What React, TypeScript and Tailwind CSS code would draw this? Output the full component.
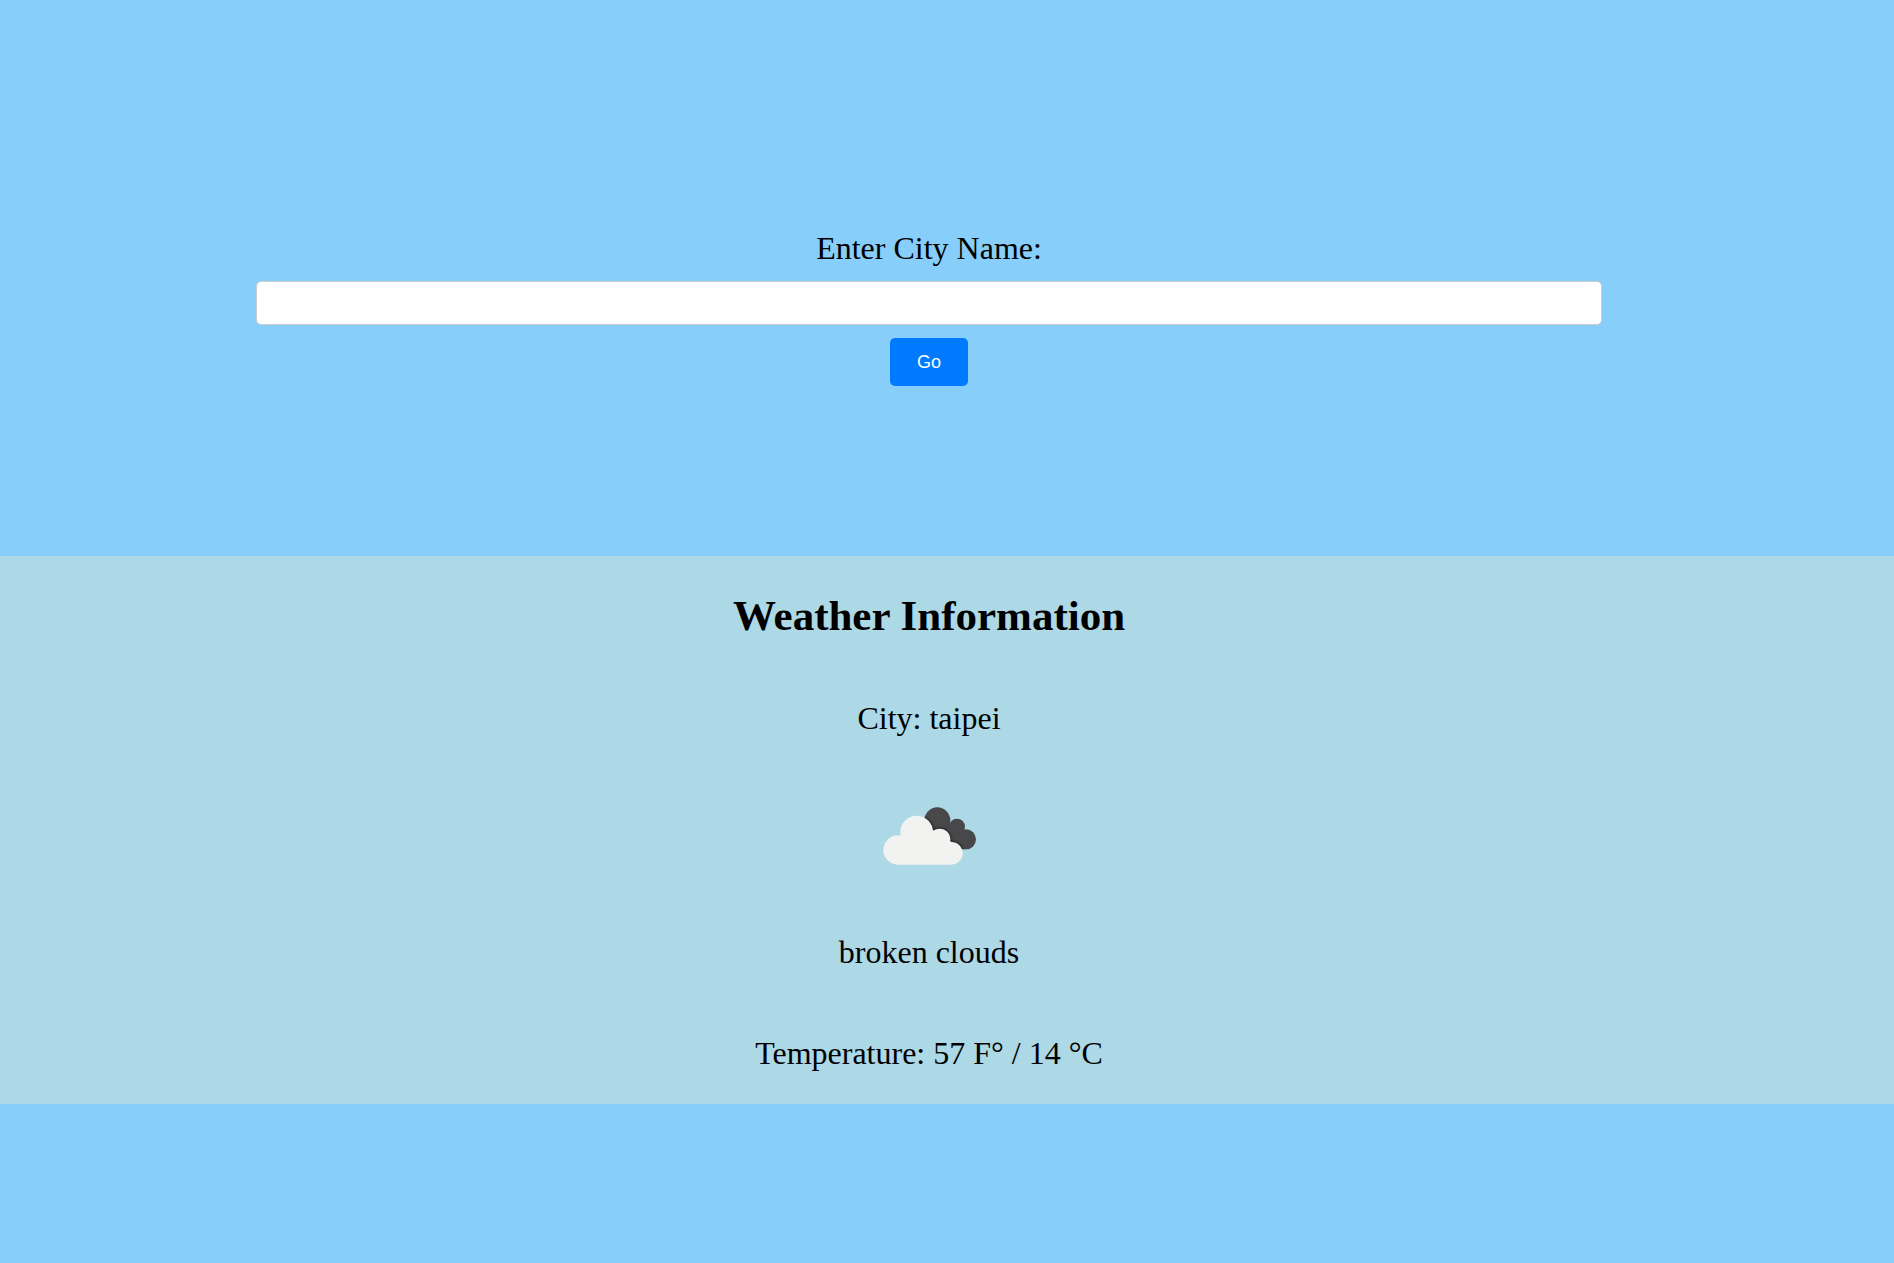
import { useState } from "react";

function CloudShape() {
  return (
    <>
      <circle cx="84" cy="180" r="44" />
      <circle cx="140" cy="126" r="49" />
      <circle cx="209" cy="148" r="32" />
      <circle cx="244" cy="190" r="34" />
      <path d="M84 224 L244 224 L244 156 L200 120 L139 130 L84 150 Z" />
    </>
  );
}

function DarkCloudShape() {
  return (
    <>
      <circle cx="202" cy="91" r="39" />
      <circle cx="261" cy="110" r="24" />
      <circle cx="288" cy="148" r="30" />
      <path d="M202 91 L261 110 L288 148 L288 178 L230 178 L180 130 Z" />
    </>
  );
}

function BrokenCloudsIcon() {
  return (
    <svg
      className="size-[100px]"
      viewBox="27 -12 300 300"
      role="img"
      aria-label="Weather icon"
    >
      <defs>
        <clipPath id="dark-cloud">
          <circle cx="202" cy="91" r="39" />
          <circle cx="261" cy="110" r="24" />
          <circle cx="288" cy="148" r="30" />
          <path d="M202 91 L261 110 L288 148 L288 178 L230 178 L180 130 Z" />
        </clipPath>
        <filter id="cloud-shadow">
          <feGaussianBlur stdDeviation="3" />
        </filter>
      </defs>
      <g fill="#48484a">
        <DarkCloudShape />
      </g>
      <g clipPath="url(#dark-cloud)">
        <g filter="url(#cloud-shadow)" fill="#1c1c1e" stroke="#1c1c1e" strokeWidth="4">
          <CloudShape />
        </g>
      </g>
      <g fill="#f2f2f0">
        <CloudShape />
      </g>
    </svg>
  );
}

export default function App() {
  const [city, setCity] = useState("");
  return (
    <main className="min-h-screen bg-[#87cefa] font-['Liberation_Serif',serif] text-[32px] leading-[37px] text-black">
      <form
        className="flex flex-col items-center pt-[230px] pr-9 pb-[170px]"
        onSubmit={(e) => e.preventDefault()}
      >
        <label htmlFor="city">Enter City Name:</label>
        <input
          id="city"
          type="text"
          value={city}
          onChange={(e) => setCity(e.target.value)}
          className="mt-3.5 h-11 w-[72.45%] rounded-[5px] border border-[#ccc] bg-white px-3 font-['Liberation_Sans',sans-serif] text-lg"
        />
        <button
          type="submit"
          className="mt-[13px] h-12 rounded-[5px] bg-[#007bff] px-[27px] font-['Liberation_Sans',sans-serif] text-lg text-white"
        >
          Go
        </button>
      </form>
      <section className="flex flex-col items-center bg-[#add8e6] pt-[35px] pr-9 pb-8">
        <h2 className="text-[43px] leading-[49px] font-bold">Weather Information</h2>
        <p className="mt-[60px]">City: taipei</p>
        <div className="mt-[49px] mb-12">
          <BrokenCloudsIcon />
        </div>
        <p>broken clouds</p>
        <p className="mt-16">Temperature: 57 F° / 14 °C</p>
      </section>
    </main>
  );
}
